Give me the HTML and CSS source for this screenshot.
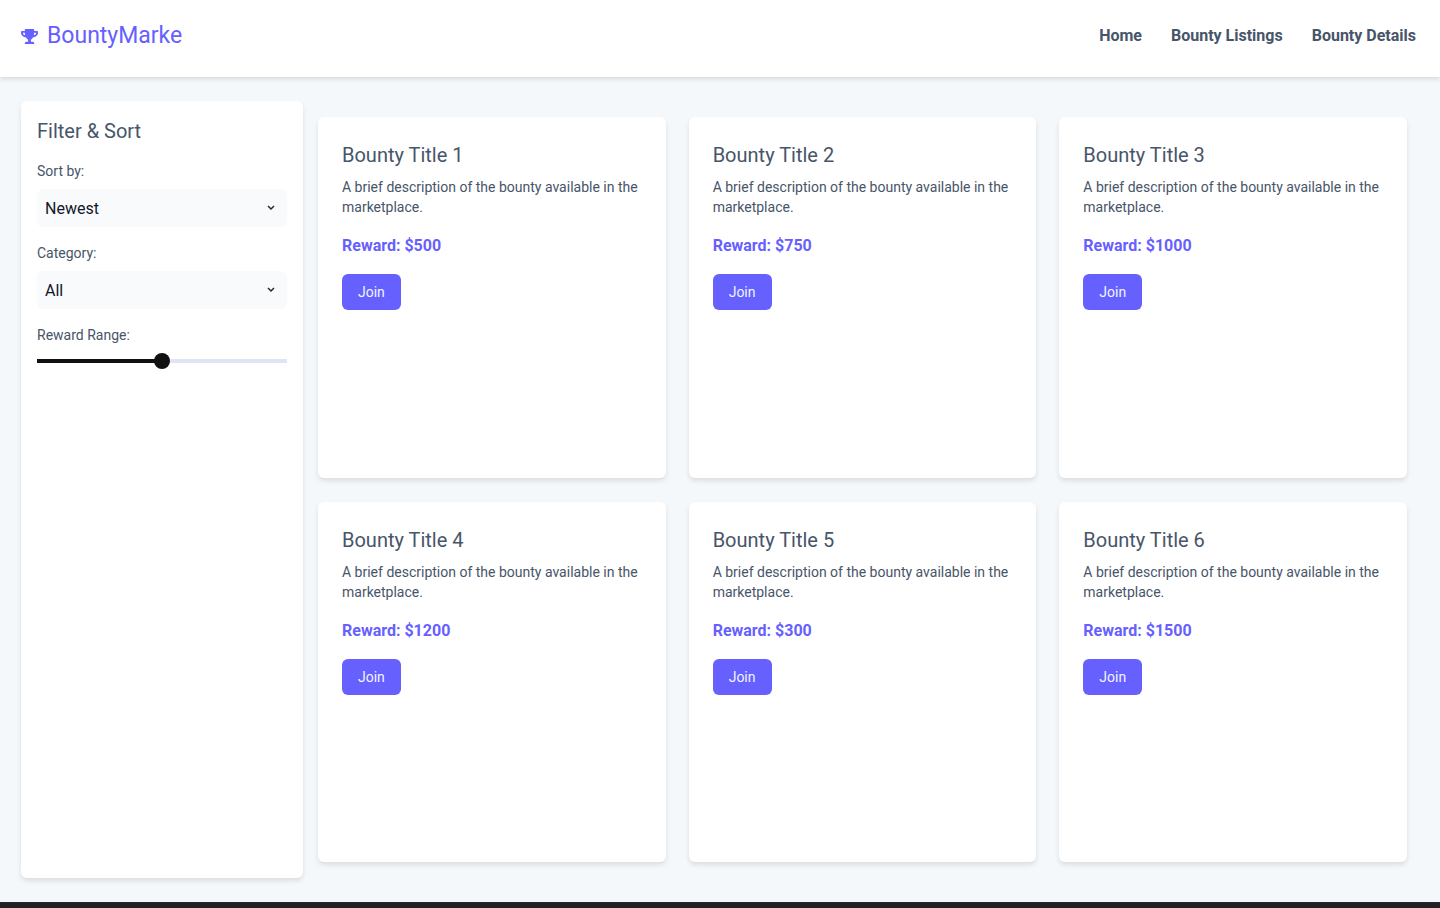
FILE: index.html
```html
<!DOCTYPE html>
<html lang="en">
<head>
<meta charset="utf-8">
<meta name="viewport" content="width=device-width, initial-scale=1">
<title>BountyMarke</title>
<link rel="stylesheet" href="styles.css">
</head>
<body>
<header class="header">
  <a class="brand" href="#">
    <svg class="brand-icon" viewBox="0 0 576 512" aria-hidden="true"><path fill="currentColor" d="M552 64H448V24c0-13.300-10.700-24-24-24H152c-13.300 0-24 10.700-24 24v40H24C10.700 64 0 74.700 0 88v56c0 35.700 22.500 72.400 61.900 100.700 31.500 22.700 69.800 37.100 110 41.700C203.300 338.500 240 360 240 360v72h-48c-35.300 0-64 20.700-64 56v12c0 6.600 5.400 12 12 12h296c6.600 0 12-5.400 12-12v-12c0-35.300-28.700-56-64-56h-48v-72s36.700-21.500 68.100-73.600c40.300-4.600 78.600-19 110-41.700 39.300-28.300 61.900-65 61.900-100.700V88c0-13.300-10.700-24-24-24zM99.300 192.800C74.900 175.200 64 155.600 64 144v-16h64.200c1 32.600 5.800 61.200 12.800 86.200-15.100-5.200-29.200-12.400-41.700-21.400zM512 144c0 16.100-17.700 36.100-35.300 48.800-12.500 9-26.700 16.200-41.800 21.400 7-25 11.800-53.600 12.800-86.200H512v16z"/></svg>
    <span>BountyMarke</span>
  </a>
  <nav class="nav">
    <a href="#">Home</a>
    <a href="#">Bounty Listings</a>
    <a href="#">Bounty Details</a>
  </nav>
</header>
<main class="main">
  <aside class="sidebar">
    <h2 class="title">Filter &amp; Sort</h2>
    <div class="field">
      <label for="sort">Sort by:</label>
      <div class="select-wrap">
        <select id="sort"><option>Newest</option></select>
        <svg class="chevron" viewBox="0 0 8 6" aria-hidden="true"><path d="M1 1l3 3 3-3"/></svg>
      </div>
    </div>
    <div class="field">
      <label for="category">Category:</label>
      <div class="select-wrap">
        <select id="category"><option>All</option></select>
        <svg class="chevron" viewBox="0 0 8 6" aria-hidden="true"><path d="M1 1l3 3 3-3"/></svg>
      </div>
    </div>
    <div class="field">
      <label for="range">Reward Range:</label>
      <input class="range" id="range" type="range" min="0" max="100" value="50">
    </div>
  </aside>
  <section class="grid">
    <article class="card">
      <h2 class="title">Bounty Title 1</h2>
      <p class="desc">A brief description of the bounty available in the marketplace.</p>
      <p class="reward">Reward: $500</p>
      <button class="join" type="button">Join</button>
    </article>
    <article class="card">
      <h2 class="title">Bounty Title 2</h2>
      <p class="desc">A brief description of the bounty available in the marketplace.</p>
      <p class="reward">Reward: $750</p>
      <button class="join" type="button">Join</button>
    </article>
    <article class="card">
      <h2 class="title">Bounty Title 3</h2>
      <p class="desc">A brief description of the bounty available in the marketplace.</p>
      <p class="reward">Reward: $1000</p>
      <button class="join" type="button">Join</button>
    </article>
    <article class="card">
      <h2 class="title">Bounty Title 4</h2>
      <p class="desc">A brief description of the bounty available in the marketplace.</p>
      <p class="reward">Reward: $1200</p>
      <button class="join" type="button">Join</button>
    </article>
    <article class="card">
      <h2 class="title">Bounty Title 5</h2>
      <p class="desc">A brief description of the bounty available in the marketplace.</p>
      <p class="reward">Reward: $300</p>
      <button class="join" type="button">Join</button>
    </article>
    <article class="card">
      <h2 class="title">Bounty Title 6</h2>
      <p class="desc">A brief description of the bounty available in the marketplace.</p>
      <p class="reward">Reward: $1500</p>
      <button class="join" type="button">Join</button>
    </article>
  </section>
</main>
<footer class="footer"></footer>
</body>
</html>
```
FILE: styles.css
```css
* {
  box-sizing: border-box;
  margin: 0;
}

body {
  display: flex;
  flex-direction: column;
  min-height: 100vh;
  background: #f4f8fb;
  color: #475569;
  font-family: Roboto, sans-serif;
  font-size: 14px;
  line-height: 20px;
}

.header {
  display: flex;
  align-items: center;
  justify-content: space-between;
  padding: 20px 24px 25px 21px;
  background: #fff;
  box-shadow: 0 2px 5px rgba(0, 0, 0, 0.13);
}

.brand {
  display: flex;
  align-items: center;
  gap: 9px;
  color: #6660ff;
  font-size: 23px;
  line-height: 32px;
  text-decoration: none;
}

.brand-icon {
  width: 17px;
  height: 15px;
}

.nav {
  display: flex;
  gap: 29px;
}

.nav a {
  color: #475569;
  font-size: 16px;
  font-weight: 700;
  text-decoration: none;
}

.main {
  display: grid;
  flex: 1;
  grid-template-columns: 282px 1fr;
  gap: 15px;
  padding: 24px 33px 24px 21px;
}

.sidebar,
.card {
  border-radius: 6px;
  background: #fff;
  box-shadow: 0 3px 5px rgba(0, 0, 0, 0.1);
}

.sidebar {
  display: flex;
  flex-direction: column;
  gap: 16px;
  padding: 16px;
}

.title {
  font-size: 20px;
  font-weight: 400;
  line-height: 28px;
}

.field {
  display: flex;
  flex-direction: column;
  gap: 8px;
}

.select-wrap {
  position: relative;
  display: flex;
}

.select-wrap select {
  width: 100%;
  height: 38px;
  padding: 0 8px;
  border: 0;
  border-radius: 6px;
  appearance: none;
  background: #f8fafc;
  color: #0f172a;
  font: 400 16px Roboto, sans-serif;
}

.chevron {
  position: absolute;
  top: 16px;
  right: 12px;
  width: 8px;
  height: 6px;
  fill: none;
  stroke: #1e293b;
  stroke-width: 1.5;
  pointer-events: none;
}

.range {
  width: 100%;
  height: 16px;
  margin: 0;
  appearance: none;
  background: linear-gradient(to right, #111 50%, #e0e4f5 50%) center / 100% 4px no-repeat;
}

.range::-webkit-slider-thumb {
  width: 16px;
  height: 16px;
  border-radius: 50%;
  appearance: none;
  background: #111;
}

.grid {
  display: grid;
  grid-template-columns: repeat(3, 1fr);
  grid-auto-rows: 1fr;
  gap: 24px 23px;
  padding: 16px 0;
}

.card {
  padding: 24px;
}

.desc {
  margin-top: 8px;
}

.reward {
  margin-top: 16px;
  color: #6660ff;
  font-size: 16px;
  font-weight: 700;
  line-height: 25px;
}

.join {
  margin-top: 16px;
  padding: 8px 16px;
  border: 0;
  border-radius: 6px;
  background: #6660ff;
  color: #f1f5ff;
  font: 400 14px/20px Roboto, sans-serif;
}

.footer {
  height: 6px;
  border-top: 1px solid #1e293b;
  background: #222;
}
```
